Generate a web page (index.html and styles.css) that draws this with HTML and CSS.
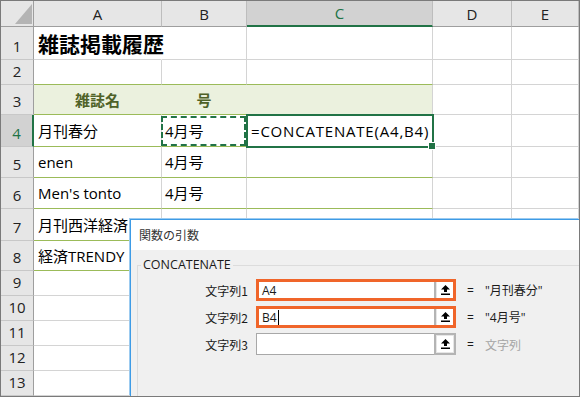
FILE: index.html
```html
<!DOCTYPE html>
<html lang="ja">
<head>
<meta charset="utf-8">
<link rel="stylesheet" href="styles.css">
</head>
<body>
<div class="frame">
  <div class="sheet">
    <div class="corner"><span class="tri"></span></div>
    <div class="ch">A</div><div class="ch">B</div><div class="ch ch-sel">C</div><div class="ch">D</div><div class="ch">E</div>

    <div class="rh">1</div><div class="c c-title">雑誌掲載履歴</div><div class="c"></div><div class="c"></div><div class="c"></div><div class="c"></div>
    <div class="rh">2</div><div class="c t-top"></div><div class="c t-top"></div><div class="c t-top"></div><div class="c"></div><div class="c"></div>
    <div class="rh">3</div><div class="c th">雑誌名</div><div class="c th">号</div><div class="c th th-last"></div><div class="c"></div><div class="c"></div>
    <div class="rh rh-sel">4</div><div class="c tr">月刊春分</div><div class="c tr copy">4月号</div><div class="c tr active">=CONCATENATE(A4,B4)<span class="handle"></span></div><div class="c"></div><div class="c"></div>
    <div class="rh">5</div><div class="c tr">enen</div><div class="c tr">4月号</div><div class="c tr"></div><div class="c"></div><div class="c"></div>
    <div class="rh">6</div><div class="c tr">Men's tonto</div><div class="c tr">4月号</div><div class="c tr"></div><div class="c"></div><div class="c"></div>
    <div class="rh">7</div><div class="c tr">月刊西洋経済</div><div class="c tr">5月号</div><div class="c tr"></div><div class="c"></div><div class="c"></div>
    <div class="rh">8</div><div class="c tr">経済TRENDY</div><div class="c tr"></div><div class="c tr"></div><div class="c"></div><div class="c"></div>
    <div class="rh">9</div><div class="c"></div><div class="c"></div><div class="c"></div><div class="c"></div><div class="c"></div>
    <div class="rh">10</div><div class="c"></div><div class="c"></div><div class="c"></div><div class="c"></div><div class="c"></div>
    <div class="rh">11</div><div class="c"></div><div class="c"></div><div class="c"></div><div class="c"></div><div class="c"></div>
    <div class="rh">12</div><div class="c"></div><div class="c"></div><div class="c"></div><div class="c"></div><div class="c"></div>
    <div class="rh">13</div><div class="c"></div><div class="c"></div><div class="c"></div><div class="c"></div><div class="c"></div>
  </div>

  <div class="dialog">
    <div class="dtitle">関数の引数</div>
    <div class="dbody">
      <div class="group">
        <div class="legend">CONCATENATE</div>
        <div class="args">
          <div class="lbl">文字列1</div>
          <div class="arg hl"><div class="field">A4</div><div class="btn"><span class="btn-in"><svg width="9" height="10" viewBox="0 0 9 10"><polygon points="4.5,0 9,4.5 6,4.5 6,7 3,7 3,4.5 0,4.5" fill="#000"/><rect x="0" y="8.5" width="9" height="1.5" fill="#000"/></svg></span></div></div>
          <div class="eq">=</div>
          <div class="res">"月刊春分"</div>

          <div class="lbl">文字列2</div>
          <div class="arg hl"><div class="field">B4<span class="caret"></span></div><div class="btn"><span class="btn-in"><svg width="9" height="10" viewBox="0 0 9 10"><polygon points="4.5,0 9,4.5 6,4.5 6,7 3,7 3,4.5 0,4.5" fill="#000"/><rect x="0" y="8.5" width="9" height="1.5" fill="#000"/></svg></span></div></div>
          <div class="eq">=</div>
          <div class="res">"4月号"</div>

          <div class="lbl">文字列3</div>
          <div class="arg"><div class="field"></div><div class="btn"><span class="btn-in"><svg width="9" height="10" viewBox="0 0 9 10"><polygon points="4.5,0 9,4.5 6,4.5 6,7 3,7 3,4.5 0,4.5" fill="#000"/><rect x="0" y="8.5" width="9" height="1.5" fill="#000"/></svg></span></div></div>
          <div class="eq">=</div>
          <div class="res res-dim">文字列</div>
        </div>
      </div>
    </div>
  </div>
</div>
</body>
</html>
```

FILE: styles.css
```css
* { box-sizing: border-box; }
html, body { margin: 0; padding: 0; background: #fff; }
body { font-family: "Open Sans", "Noto Sans CJK JP", sans-serif; color: #000; }

.frame {
  position: relative;
  width: 580px;
  height: 397px;
  border: 1px solid #7a7a7a;
  overflow: hidden;
  background: #fff;
}

.sheet {
  display: grid;
  grid-template-columns: 33px 128px 85px 186px 79px 67px;
  grid-template-rows: 26px 33px 25px 30px 32px 31px 31px 32px 30px 25px 25px 25px 25px 25px;
}

.corner {
  background: #e6e6e6;
  border-right: 1px solid #9e9e9e;
  border-bottom: 1px solid #9e9e9e;
  display: flex;
  align-items: flex-end;
  justify-content: flex-end;
  padding: 0 1px 2px 0;
}
.tri {
  width: 17px;
  height: 20px;
  background: #b4b4b4;
  clip-path: polygon(100% 0, 100% 100%, 0 100%);
}

.ch {
  background: #e6e6e6;
  border-right: 1px solid #bdbdbd;
  border-bottom: 1px solid #9e9e9e;
  display: flex;
  align-items: center;
  justify-content: center;
  font-size: 15px;
  color: #222;
  line-height: 20px;
}
.ch-sel {
  background: #d2d2d2;
  color: #217346;
  border-bottom: 2px solid #217346;
}

.rh {
  background: #e6e6e6;
  border-right: 1px solid #9e9e9e;
  border-bottom: 1px solid #c8c8c8;
  display: flex;
  align-items: flex-end;
  justify-content: center;
  padding-bottom: 3px;
  font-size: 15px;
  line-height: 20px;
  color: #222;
}
.rh-sel {
  background: #d2d2d2;
  color: #217346;
  border-right: 2px solid #217346;
}

.c {
  border-right: 1px solid #d4d4d4;
  border-bottom: 1px solid #d4d4d4;
  display: flex;
  align-items: center;
  padding-left: 3px;
  font-size: 15px;
  line-height: 20px;
  white-space: nowrap;
  position: relative;
}

.c-title {
  font-size: 21px;
  font-weight: bold;
  line-height: 28px;
  padding-left: 4px;
  padding-top: 1px;
  border-right-color: transparent;
  overflow: visible;
  z-index: 1;
}

.t-top { border-bottom-color: #9bbb59; }

.th {
  background: #ebf1de;
  border-right-color: #ebf1de;
  border-bottom-color: #9bbb59;
  justify-content: center;
  padding-left: 0;
  font-weight: bold;
  color: #4f6228;
}
.th-last { border-right-color: #d4d4d4; }

.tr { border-bottom-color: #9bbb59; }
.sheet > .tr:nth-child(6n+2) { padding-left: 4px; }

.active {
  padding-left: 4px;
  letter-spacing: 0.8px;
  outline: 2px solid #217346;
  outline-offset: -1px;
  z-index: 2;
}
.handle {
  position: absolute;
  right: -3px;
  bottom: -3px;
  width: 6px;
  height: 6px;
  background: #217346;
  box-shadow: 0 0 0 1px #fff;
}

.copy::after {
  content: "";
  position: absolute;
  top: 1px;
  left: -1px;
  right: 0;
  bottom: 0;
  border: 2px dashed #217346;
}

/* dialog */
.dialog {
  position: absolute;
  left: 129px;
  top: 218px;
  width: 449px;
  height: 177px;
  border-top: 1px solid #3d9be6;
  border-left: 1px solid #3d9be6;
  box-shadow: -1px -1px 0 #9ccbf0;
  background: #f0f0f0;
  display: flex;
  flex-direction: column;
  font-size: 12px;
  color: #1a1a1a;
  z-index: 5;
}
.dtitle {
  height: 30px;
  background: #fff;
  line-height: 30px;
  padding-left: 8px;
  font-family: "Noto Sans CJK JP", sans-serif;
  color: #333;
}
.dbody {
  flex: 1;
  padding: 15px 0 0 6px;
}
.group {
  border-top: 1px solid #dcdcdc;
  border-left: 1px solid #dcdcdc;
  height: 100%;
}
.legend {
  width: max-content;
  margin: -9px 0 0 3px;
  padding: 0 2px;
  background: #f0f0f0;
  line-height: 16px;
  font-size: 12.5px;
}
.args {
  display: grid;
  grid-template-columns: 118px 200px 29px auto;
  grid-auto-rows: 22px;
  row-gap: 5px;
  margin-top: 6px;
  align-items: center;
}
.lbl {
  text-align: right;
  padding-right: 8px;
  font-family: "Noto Sans CJK JP", sans-serif;
}
.arg {
  height: 22px;
  display: flex;
  background: #fff;
}
.arg.hl {
  outline: 3px solid #f0652a;
  outline-offset: -3px;
}
.field {
  flex: 1;
  border: 1px solid #a8a8a8;
  border-right: none;
  padding-left: 5px;
  line-height: 19px;
  display: flex;
  align-items: center;
}
.caret {
  display: inline-block;
  width: 1px;
  height: 15px;
  background: #000;
  margin-left: 1px;
}
.btn {
  width: 22px;
  border: 2px solid #b4b4b4;
  background: #e6e6e6;
  padding: 1px;
  display: flex;
}
.btn-in {
  flex: 1;
  background: #fff;
  display: flex;
  align-items: center;
  justify-content: center;
}
.btn-in svg { display: block; }
.eq { padding-left: 11px; }
.res { font-family: "Open Sans", "Noto Sans CJK JP", sans-serif; }
.res-dim { color: #a5a5a5; font-family: "Noto Sans CJK JP", sans-serif; }
```
